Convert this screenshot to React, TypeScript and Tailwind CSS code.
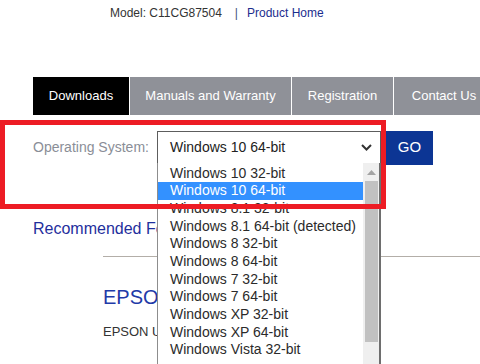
const osList = [
  "Windows 10 32-bit",
  "Windows 10 64-bit",
  "Windows 8.1 32-bit",
  "Windows 8.1 64-bit (detected)",
  "Windows 8 32-bit",
  "Windows 8 64-bit",
  "Windows 7 32-bit",
  "Windows 7 64-bit",
  "Windows XP 32-bit",
  "Windows XP 64-bit",
  "Windows Vista 32-bit",
];

const tabs = [
  { label: "Downloads", width: "w-[96px]", active: true },
  { label: "Manuals and Warranty", width: "w-[161px]", active: false },
  { label: "Registration", width: "w-[101px]", active: false },
  { label: "Contact Us", width: "w-[100px]", active: false },
];

function OsDropdown() {
  return (
    <div className="absolute left-0 top-full -mt-px w-[224px] h-[220px] bg-white border-l border-[#8d8d8d] border-r-2 border-r-[#6e6e6e] flex">
      <ul className="flex-1 pt-[1.5px]">
        {osList.map((os) => (
          <li
            key={os}
            className={
              os === "Windows 10 64-bit"
                ? "h-[17.7px] leading-[17.7px] pl-[12px] bg-[#3391ff] text-white whitespace-nowrap"
                : "h-[17.7px] leading-[17.7px] pl-[12px] text-[#2b2b2b] whitespace-nowrap"
            }
          >
            {os}
          </li>
        ))}
      </ul>

      {/* scrollbar */}
      <div className="w-[16px] bg-[#efefef] flex flex-col items-center pt-px">
        <div className="h-[17px] flex items-center justify-center">
          <svg width="9" height="5" viewBox="0 0 9 5">
            <polygon points="0,5 4.5,0 9,5" fill="#a3a3a3" />
          </svg>
        </div>
        <div className="w-[13px] h-[161px] bg-[#c1c1c1]" />
      </div>
    </div>
  );
}

export default function App() {
  return (
    <div className="relative w-[480px] h-[364px] overflow-hidden bg-white font-['Liberation_Sans',Arial,sans-serif]">
      {/* model line */}
      <div className="h-[26px] pl-[110px] flex items-center text-[12px]">
        <span className="text-[#333]">Model: C11CG87504</span>
        <span className="ml-[13px] text-[#44507f]">|</span>
        <span className="ml-[9px] text-[#1b2d8e]">Product Home</span>
      </div>

      {/* tabs */}
      <nav className="mt-[51px] ml-[33px] flex gap-px h-[38px] text-[13px] text-white">
        {tabs.map((t) => (
          <div
            key={t.label}
            className={`${t.width} shrink-0 flex items-center justify-center ${
              t.active ? "bg-black" : "bg-[#8f9198]"
            }`}
          >
            {t.label}
          </div>
        ))}
      </nav>

      {/* OS picker */}
      <div className="mt-[16px] pl-[33px] flex items-center h-[33px] text-[14px] relative z-10">
        <span className="w-[124px] text-[#8a8e97]">Operating System:</span>
        <div className="relative">
          <div className="w-[224px] h-[33px] border border-[#5d5d5d] bg-white flex items-center justify-between pl-[12px] pr-[8px] text-[#222]">
            <span>Windows 10 64-bit</span>
            <svg width="11" height="7" viewBox="0 0 11 7">
              <polyline points="1,1 5.5,5.5 10,1" fill="none" stroke="#333" strokeWidth="2" />
            </svg>
          </div>
          <OsDropdown />
        </div>
        <button className="ml-[5px] w-[47px] h-[34px] bg-[#0c3594] text-white text-[15px]">GO</button>
      </div>

      {/* content partly hidden behind the open list */}
      <div className="mt-[56px] ml-[33px] w-[124px] overflow-hidden whitespace-nowrap text-[16px] leading-[18px] text-[#1f2f9d]">
        Recommended For You
      </div>

      <div className="mt-[18px] ml-[103px] border-t border-[#b3aea8]" />

      <div className="mt-[29px] ml-[103px] w-[54px] overflow-hidden whitespace-nowrap text-[20px] leading-[23px] text-[#1f3aa8]">
        EPSON Scan
      </div>
      <div className="mt-[15px] ml-[103px] w-[54px] overflow-hidden whitespace-nowrap text-[13px] leading-[15px] text-[#333]">
        EPSON Universal Print Driver
      </div>

      {/* red annotation box */}
      <div className="absolute left-0 top-[120px] w-[386px] h-[89px] border-[5px] border-[#ed1c24] z-20 pointer-events-none" />
    </div>
  );
}
